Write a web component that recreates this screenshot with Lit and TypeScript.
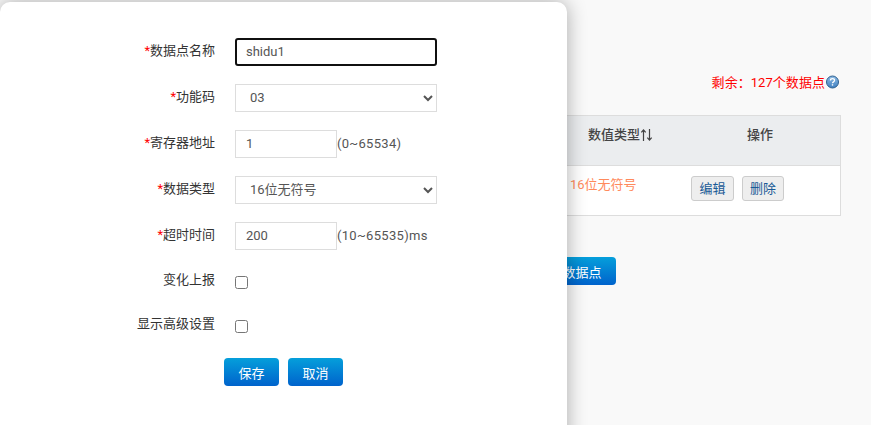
import { LitElement, html, css } from "lit";
import { customElement } from "lit/decorators.js";

@customElement("app-root")
export class AppRoot extends LitElement {
  static styles = css`
    :host {
      display: block;
      position: relative;
      width: 871px;
      height: 425px;
      overflow: hidden;
      background: #f9f9f9;
      font-family: Roboto, "Noto Sans CJK SC", sans-serif;
      font-size: 13px;
      color: #555;
    }
    * { box-sizing: border-box; }
    .page {
      display: flex;
      flex-direction: column;
      align-items: flex-end;
      padding: 74px 30px 0 30px;
      height: 425px;
    }
    .remain {
      display: flex;
      align-items: center;
      height: 18px;
      color: #f00;
      font-size: 13px;
      line-height: 18px;
      margin-right: 2px;
    }
    .remain span { letter-spacing: 0.05px; }
    .remain svg { display: block; margin-left: 1px; margin-top: -2px; }
    .table {
      margin-top: 23px;
      width: 811px;
      border: 1px solid #ddd;
      background: #fff;
    }
    .tr {
      display: grid;
      grid-template-columns: 1fr 130px 160px;
    }
    .thead {
      height: 50px;
      background: #ebedef;
      border-bottom: 1px solid #ddd;
      font-weight: 500;
      color: #444;
    }
    .th { padding-top: 9px; line-height: 20px; text-align: center; }
    .th.type { display: flex; align-items: center; height: 29px; text-align: left; padding-left: 38px; }
    .th.type svg { display: block; margin-left: 0; }
    .tbody { height: 49px; }
    .td { padding-top: 9px; line-height: 20px; }
    .td.type { color: #ff8a5c; padding-left: 20px; }
    .ops { display: flex; gap: 8px; padding: 10px 0 0 11px; }
    .op {
      width: 43px;
      height: 25px;
      border: 1px solid #ccc;
      border-radius: 3px;
      background: #eee;
      color: #1a5a96;
      font: inherit;
      padding: 0;
      line-height: 22px;
    }
    .op + .op { width: 42px; }
    .add-wrap { margin-top: 41px; margin-right: 225px; }
    .btn {
      border: 0;
      border-radius: 4px;
      background: linear-gradient(#059fdb, #0063cc);
      color: #fff;
      font: inherit;
      height: 28px;
      padding: 0;
    }
    .btn.add { width: 94px; }
    .modal {
      position: absolute;
      left: 0;
      top: 2px;
      width: 567px;
      height: 450px;
      background: #fff;
      border-radius: 10px;
      box-shadow: 0 0 20px rgba(0, 0, 0, 0.32);
      padding-top: 36px;
    }
    .row {
      display: grid;
      grid-template-columns: 215px auto;
      column-gap: 20px;
      align-items: center;
      height: 28px;
      margin-bottom: 18px;
    }
    .row.check { height: 26px; margin-bottom: 18px; }
    .label { text-align: right; color: #333; line-height: 20px; margin-top: -2px; }
    .label i { font-style: normal; color: #f00; }
    .field { display: flex; align-items: center; }
    .input, .select {
      height: 28px;
      border: 1px solid #ddd;
      background: #fff;
      color: #555;
      font: inherit;
      outline: none;
      border-radius: 0;
    }
    .input { width: 102px; padding: 0 10px 2px; }
    .input.name {
      width: 202px;
      border: 2px solid #101010;
      border-radius: 3px;
      padding: 0 9px 2px;
    }
    .select { width: 202px; padding: 0 10px 2px; }
    .hint { color: #555; letter-spacing: 0.3px; margin-top: -2px; }
    .cb { width: 13px; height: 13px; margin: 0; display: block; }
    .row.check .field { margin-top: 2px; }
    .actions {
      display: flex;
      gap: 9px;
      padding: 2px 0 0 224px;
    }
    .actions .btn { width: 55px; }
  `;

  render() {
    return html`
      <div class="page">
        <div class="remain">
          <span>剩余：127个数据点</span>
          <svg width="13" height="14" viewBox="0 0 13 14">
            <defs>
              <linearGradient id="q" x1="0" y1="0" x2="0" y2="1">
                <stop offset="0" stop-color="#8fbde6"></stop>
                <stop offset="1" stop-color="#3f7fc0"></stop>
              </linearGradient>
            </defs>
            <circle cx="6.5" cy="7" r="6" fill="url(#q)" stroke="#2d5f8f"></circle>
            <path d="M4.5 5.4C4.5 4.2 5.5 3.7 6.5 3.7s2 .6 2 1.7c0 1.5-2 1.4-2 2.9" fill="none" stroke="#fff" stroke-width="1.3"></path>
            <rect x="5.8" y="9.2" width="1.4" height="1.4" fill="#fff"></rect>
          </svg>
        </div>
        <div class="table">
          <div class="tr thead">
            <div class="th"></div>
            <div class="th type">
              数值类型
              <svg width="13" height="12" viewBox="0 0 13 12" fill="none" stroke="#444" stroke-width="1.2">
                <path d="M3.5 12V1M1.3 3.4 3.5 1l2.2 2.4"></path>
                <path d="M9.5 0v11M7.3 8.6 9.5 11l2.2-2.4"></path>
              </svg>
            </div>
            <div class="th">操作</div>
          </div>
          <div class="tr tbody">
            <div class="td"></div>
            <div class="td type">16位无符号</div>
            <div class="ops">
              <button class="op">编辑</button>
              <button class="op">删除</button>
            </div>
          </div>
        </div>
        <div class="add-wrap"><button class="btn add">添加数据点</button></div>
      </div>

      <div class="modal">
        <div class="row">
          <div class="label"><i>*</i>数据点名称</div>
          <div class="field"><input class="input name" .value=${"shidu1"} /></div>
        </div>
        <div class="row">
          <div class="label"><i>*</i>功能码</div>
          <div class="field"><select class="select"><option>03</option></select></div>
        </div>
        <div class="row">
          <div class="label"><i>*</i>寄存器地址</div>
          <div class="field"><input class="input" .value=${"1"} /><span class="hint">(0~65534)</span></div>
        </div>
        <div class="row">
          <div class="label"><i>*</i>数据类型</div>
          <div class="field"><select class="select"><option>16位无符号</option></select></div>
        </div>
        <div class="row">
          <div class="label"><i>*</i>超时时间</div>
          <div class="field"><input class="input" .value=${"200"} /><span class="hint">(10~65535)ms</span></div>
        </div>
        <div class="row check">
          <div class="label">变化上报</div>
          <div class="field"><input class="cb" type="checkbox" /></div>
        </div>
        <div class="row check">
          <div class="label">显示高级设置</div>
          <div class="field"><input class="cb" type="checkbox" /></div>
        </div>
        <div class="actions">
          <button class="btn">保存</button>
          <button class="btn">取消</button>
        </div>
      </div>
    `;
  }
}
